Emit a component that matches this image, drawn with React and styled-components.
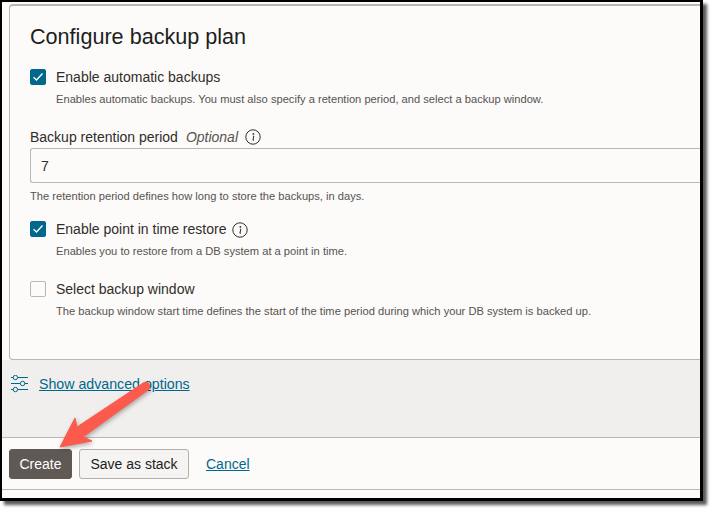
import React from "react";
import styled, { createGlobalStyle } from "styled-components";

const GlobalStyle = createGlobalStyle`
    html, body {
        margin: 0;
        background: #fff;
        font-family: "Liberation Sans", Arial, sans-serif;
        color: #312d2a;
    }
`;

const Screen = styled.div`
    position: relative;
    width: 712px;
    height: 510px;
    overflow: hidden;
`;

const Frame = styled.div`
    box-sizing: border-box;
    width: 703px;
    height: 501px;
    border-style: solid;
    border-color: #000;
    border-width: 2px 3px 3px 2px;
    background: #fcfbf9;
    box-shadow: 4px 4px 3px rgba(0, 0, 0, 0.65);
    display: flex;
    flex-direction: column;
    overflow: hidden;
`;

const Panel = styled.section`
    box-sizing: border-box;
    height: 356px;
    margin: 2px -12px 0 7px;
    padding: 16px 0 0 20px;
    border: 1px solid #bcb6b1;
    border-top-width: 2px;
    border-radius: 4px 4px 0 4px;
    flex: none;
`;

const Title = styled.h2`
    margin: 0 0 16px;
    font-size: 21.6px;
    line-height: 30px;
    font-weight: 400;
    color: #201e1c;
`;

const CheckRow = styled.div`
    display: grid;
    grid-template-columns: 16px 1fr;
    column-gap: 10px;
    align-items: center;
    margin-top: ${(p) => p.$top || 0}px;
`;

const Box = styled.span`
    box-sizing: border-box;
    width: 16px;
    height: 16px;
    border-radius: 2px;
    border: 1px solid ${(p) => (p.$on ? "#00688c" : "#bcb6b1")};
    background: ${(p) => (p.$on ? "#00688c" : "#fcfbf9")};
    display: flex;
    align-items: center;
    justify-content: center;
`;

const CheckLabel = styled.span`
    font-size: 14px;
    line-height: 18px;
    display: flex;
    align-items: center;
    gap: 6px;

    svg {
        margin-top: 2px;
    }
`;

const Hint = styled.p`
    margin: 6px 0 0;
    font-size: 11.15px;
    line-height: 14px;
    color: #575350;
    grid-column: ${(p) => (p.$wide ? "auto" : "2")};
`;

const FieldLabel = styled.div`
    margin-top: 22px;
    font-size: 14px;
    line-height: 18px;
    display: flex;
    align-items: center;
    gap: 7px;
`;

const Optional = styled.em`
    color: #575350;
    margin-left: 1px;
`;

const Input = styled.div`
    box-sizing: border-box;
    height: 35px;
    margin-top: 2px;
    padding-left: 10px;
    display: flex;
    align-items: center;
    font-size: 14px;
    border: 1px solid #bcb6b1;
    border-right: 0;
    border-radius: 3px 0 0 3px;
`;

const Advanced = styled.div`
    box-sizing: border-box;
    height: 78px;
    flex: none;
    padding: 15px 0 0 8px;
    display: flex;
    align-items: flex-start;
    gap: 11px;
    background: #f1efed;
    border-bottom: 1px solid #bcb6b1;
`;

const TextLink = styled.a`
    font-size: 14.2px;
    line-height: 18px;
    color: #00688c;
    text-decoration: underline;
`;

const Footer = styled.footer`
    box-sizing: border-box;
    height: 52px;
    flex: none;
    padding: 11px 0 0 7px;
    display: flex;
    align-items: flex-start;
    gap: 7px;
    border-bottom: 1px solid #bcb6b1;
`;

const Button = styled.button`
    box-sizing: border-box;
    height: 30px;
    width: ${(p) => p.$width}px;
    padding: 0;
    font-family: inherit;
    font-size: 14px;
    border-radius: 3px;
    border: 1px solid ${(p) => (p.$primary ? "#5f5955" : "#b5afaa")};
    background: ${(p) => (p.$primary ? "#5f5955" : "#f5f4f2")};
    color: ${(p) => (p.$primary ? "#fff" : "#201e1c")};
`;

const CancelLink = styled(TextLink)`
    margin: 6px 0 0 10px;
    font-size: 14px;
`;

const ArrowMark = styled.svg`
    position: absolute;
    left: 55px;
    top: 378px;
    width: 100px;
    height: 76px;
    overflow: visible;
    filter: drop-shadow(1px 2px 2px rgba(0, 0, 0, 0.3));
`;

const InfoIcon = () => (
    <svg width="16" height="16" viewBox="0 0 16 16" fill="none">
        <circle cx="8" cy="8" r="7.2" stroke="#312d2a" strokeWidth="1" />
        <circle cx="8.4" cy="4.9" r="0.9" fill="#312d2a" />
        <path d="M7.9 7.2 H8.8 L7.9 11.2 H9" stroke="#312d2a" strokeWidth="1" />
    </svg>
);

const CheckMark = () => (
    <svg width="12" height="10" viewBox="0 0 12 10" fill="none">
        <path d="M1.5 5.2 L4.5 8 L10.5 1.6" stroke="#fff" strokeWidth="1.4" />
    </svg>
);

const SlidersIcon = () => (
    <svg width="18" height="18" viewBox="0 0 18 18" fill="none" stroke="#00688c" strokeWidth="1">
        <path d="M1 2.5 H3.2 M7.6 2.5 H18" />
        <circle cx="5.4" cy="2.5" r="2.2" />
        <path d="M1 8.5 H10.4 M14.8 8.5 H18" />
        <circle cx="12.6" cy="8.5" r="2.2" />
        <path d="M1 14.5 H3.2 M7.6 14.5 H18" />
        <circle cx="5.4" cy="14.5" r="2.2" />
    </svg>
);

const App = () => (
    <Screen>
        <GlobalStyle />
        <Frame>
            <Panel>
                <Title>Configure backup plan</Title>
                <CheckRow>
                    <Box $on><CheckMark /></Box>
                    <CheckLabel>Enable automatic backups</CheckLabel>
                    <Hint>Enables automatic backups. You must also specify a retention period, and select a backup window.</Hint>
                </CheckRow>
                <FieldLabel>
                    <span>Backup retention period</span>
                    <Optional>Optional</Optional>
                    <InfoIcon />
                </FieldLabel>
                <Input>7</Input>
                <Hint $wide>The retention period defines how long to store the backups, in days.</Hint>
                <CheckRow $top={17}>
                    <Box $on><CheckMark /></Box>
                    <CheckLabel>Enable point in time restore <InfoIcon /></CheckLabel>
                    <Hint>Enables you to restore from a DB system at a point in time.</Hint>
                </CheckRow>
                <CheckRow $top={22}>
                    <Box />
                    <CheckLabel>Select backup window</CheckLabel>
                    <Hint>The backup window start time defines the start of the time period during which your DB system is backed up.</Hint>
                </CheckRow>
            </Panel>
            <Advanced>
                <SlidersIcon />
                <TextLink>Show advanced options</TextLink>
            </Advanced>
            <Footer>
                <Button $primary $width={63}>Create</Button>
                <Button $width={110}>Save as stack</Button>
                <CancelLink>Cancel</CancelLink>
            </Footer>
        </Frame>
        <ArrowMark viewBox="0 0 100 76">
            <path
                d="M5 69 L20 40 L22 49 L89 4.5 Q92 3 94 6 Q96 10 93 12 L28 59 L37 63 Z"
                fill="#fb5a4c"
                stroke="#fb5a4c"
                strokeLinejoin="round"
            />
        </ArrowMark>
    </Screen>
);

export default App;
